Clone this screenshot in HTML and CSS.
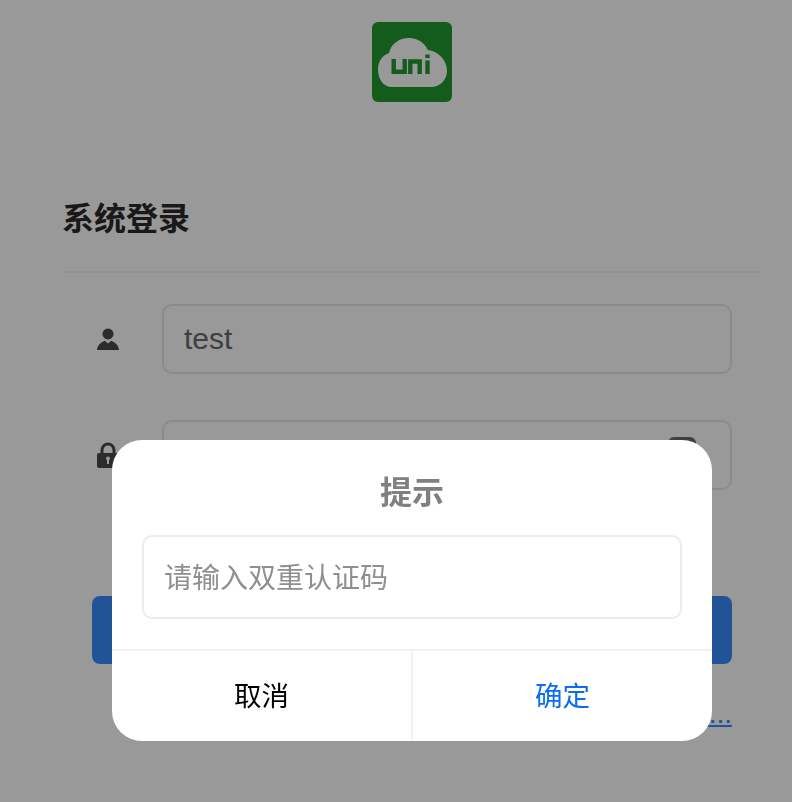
FILE: index.html
```html
<!DOCTYPE html>
<html lang="zh-CN">
<head>
    <meta charset="UTF-8">
    <meta name="viewport" content="width=device-width, initial-scale=1.0">
    <title>系统登录</title>
    <link rel="stylesheet" href="styles.css">
</head>
<body>
    <div class="page">
        <div class="logo">
            <svg width="80" height="80" viewBox="0 0 80 80">
                <rect width="80" height="80" rx="6" fill="#229a2f"/>
                <path d="M20 65C11 65 6 57 6 47C6 39 11 33 17 31C19 22 27 16 37 16C45 16 52 20 56 28C66 29 75 38 75 49C75 58 68 65 59 65Z" fill="#fff"/>
                <path d="M21.700 37V49.800H32.700V37M38.300 52V39.500H47.700V52M55.500 38.500V52M55.500 32.500V36" fill="none" stroke="#229a2f" stroke-width="4.400"/>
            </svg>
        </div>

        <div class="title">系统登录</div>

        <div class="form">
            <div class="row">
                <div class="row-icon">
                    <svg width="22" height="22" viewBox="0 0 24 24">
                        <circle cx="12" cy="6.500" r="6" fill="#484848"/>
                        <path d="M0 24C0.500 19 4 16 8.500 14L12 17L15.500 14C20 16 23.500 19 24 24Z" fill="#484848"/>
                    </svg>
                </div>
                <div class="input">test</div>
            </div>
            <div class="row">
                <div class="row-icon">
                    <svg width="22" height="26" viewBox="0 0 22 26">
                        <path d="M5 12V8A6 6 0 0 1 17 8V12" fill="none" stroke="#484848" stroke-width="3"/>
                        <rect x="0" y="11" width="22" height="15" rx="2" fill="#484848"/>
                        <circle cx="11" cy="16.500" r="2" fill="#fff"/>
                        <rect x="10" y="17" width="2" height="5" fill="#fff"/>
                    </svg>
                </div>
                <div class="input">
                    <span class="eye"></span>
                </div>
            </div>
            <div class="submit">登录</div>
            <div class="links"><a class="link" href="#">忘记密码...</a></div>
        </div>
    </div>

    <div class="mask">
        <div class="dialog">
            <div class="dialog-title">提示</div>
            <div class="dialog-body">
                <div class="dialog-input">请输入双重认证码</div>
            </div>
            <div class="dialog-btns">
                <div class="dialog-btn">取消</div>
                <div class="dialog-btn primary">确定</div>
            </div>
        </div>
    </div>
</body>
</html>
```

FILE: styles.css
```css
*{
    margin: 0;
    padding: 0;
    box-sizing: border-box;
}

body{
    background: #ffffff;
    font-family: "Liberation Sans", "Noto Sans CJK SC", sans-serif;
    height: 802px;
    overflow: hidden;
}

.page{
    padding: 22px 31px 0 63px;
}

.logo{
    display: flex;
    justify-content: center;
    height: 80px;
}

.title{
    margin-top: 96px;
    margin-right: -1px;
    height: 75px;
    line-height: 42px;
    font-size: 32px;
    font-weight: 700;
    color: #2a2a2a;
    text-indent: -1px;
    border-bottom: 2px solid #f3f3f3;
    margin-bottom: 31px;
}

.form{
    padding-left: 29px;
    width: 669px;
}

.row{
    display: flex;
    align-items: center;
    height: 70px;
    margin-bottom: 46px;
}

.row-icon{
    display: flex;
    justify-content: center;
    padding-right: 38px;
    flex: 0 0 70px;
}

.input{
    flex: 1;
    height: 70px;
    line-height: 66px;
    padding-left: 20px;
    font-size: 30px;
    color: #6a6a6a;
    border: 2px solid #e8e8e8;
    border-radius: 10px;
    position: relative;
}

.eye{
    position: absolute;
    right: 34px;
    top: 15px;
    width: 28px;
    height: 28px;
    background: #6b6b6b;
    border-radius: 6px;
}

.submit{
    height: 68px;
    margin-top: 106px;
    line-height: 68px;
    text-align: center;
    color: #ffffff;
    font-size: 28px;
    background: #378cfc;
    border-radius: 8px;
}

.links{
    text-align: right;
    margin-top: 30px;
    font-size: 28px;
    line-height: 40px;
}

.link{
    color: #378cfc;
}

.mask{
    position: fixed;
    top: 0;
    left: 0;
    right: 0;
    bottom: 0;
    background: rgba(0, 0, 0, 0.4);
}

.dialog{
    position: absolute;
    left: 112px;
    top: 440px;
    width: 600px;
    height: 301px;
    background: #ffffff;
    border-radius: 30px;
    overflow: hidden;
    display: flex;
    flex-direction: column;
}

.dialog-title{
    padding-top: 33px;
    flex: 0 0 95px;
    line-height: 40px;
    text-align: center;
    font-size: 32px;
    font-weight: 700;
    color: #808080;
}

.dialog-body{
    padding: 0 30px;
    flex: 0 0 116px;
    border-bottom: 2px solid #f2f2f2;
}

.dialog-input{
    height: 84px;
    line-height: 83px;
    padding-left: 20px;
    font-size: 28px;
    color: #8f8f8f;
    border: 2px solid #ececec;
    border-radius: 10px;
}

.dialog-btns{
    flex: 0 0 90px;
    display: flex;
}

.dialog-btn{
    flex: 1;
    padding-top: 2px;
    text-align: center;
    line-height: 88px;
    font-size: 27.500px;
    color: #000000;
}

.dialog-btn.primary{
    color: #0a6cf0;
    border-left: 2px solid #f2f2f2;
}
```
